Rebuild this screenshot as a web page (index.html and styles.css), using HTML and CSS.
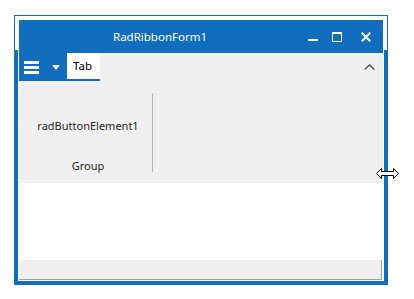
FILE: index.html
```html
<!DOCTYPE html>
<html lang="en">
<head>
    <meta charset="UTF-8">
    <meta name="viewport" content="width=device-width, initial-scale=1.0">
    <title>RadRibbonForm1</title>
    <link rel="stylesheet" href="styles.css">
</head>
<body>
    <div class="window">
        <div class="titlebar">
            <div class="title">RadRibbonForm1</div>
            <div class="caption-buttons">
                <svg class="cap cap-min" width="10" height="10" viewBox="0 0 10 10">
                    <rect x="0" y="7" width="10" height="2" fill="#fff"/>
                </svg>
                <svg class="cap cap-max" width="10" height="10" viewBox="0 0 10 10">
                    <rect x="0.5" y="0.5" width="9" height="9" fill="none" stroke="#fff"/>
                    <rect x="0" y="0" width="10" height="2" fill="#fff"/>
                </svg>
                <svg class="cap cap-close" width="10" height="10" viewBox="0 0 10 10">
                    <path d="M0.8 0.8 L9.2 9.2 M9.2 0.8 L0.8 9.2" stroke="#fff" stroke-width="2"/>
                </svg>
            </div>
        </div>

        <div class="tabstrip">
            <div class="app-button">
                <svg class="hamburger" width="15" height="13" viewBox="0 0 15 13">
                    <rect x="0" y="0" width="15" height="3" fill="#fff"/>
                    <rect x="0" y="5" width="15" height="3" fill="#fff"/>
                    <rect x="0" y="10" width="15" height="3" fill="#fff"/>
                </svg>
                <svg class="drop" width="8" height="5" viewBox="0 0 8 5">
                    <path d="M0 0 H8 L4 5 Z" fill="#fff"/>
                </svg>
            </div>
            <div class="tab active">Tab</div>
            <div class="spacer"></div>
            <svg class="collapse" width="11" height="6" viewBox="0 0 11 6">
                <path d="M0.7 5.5 L5.5 0.9 L10.3 5.5" fill="none" stroke="#555" stroke-width="1.4"/>
            </svg>
        </div>

        <div class="ribbon">
            <div class="group">
                <div class="group-items">radButtonElement1</div>
                <div class="group-title">Group</div>
            </div>
        </div>

        <div class="client"></div>
        <div class="statusbar"></div>
    </div>

    <svg class="resize-cursor" width="23" height="11" viewBox="0 0 23 11">
        <path d="M0.5 5.5 L5.5 0.5 V3.5 H17.5 V0.5 L22.5 5.5 L17.5 10.5 V7.5 H5.5 V10.5 Z" fill="#fff" stroke="#000"/>
    </svg>
</body>
</html>
```

FILE: styles.css
```css
body {
    margin: 0;
    background: #fff;
    font-family: "Segoe UI", "Noto Sans", "Open Sans", sans-serif;
    font-size: 11px;
}
.window {
    margin: 15px 0 0 14px;
    width: 364px;
    height: 260px;
    padding: 4px;
    border: 1px solid #116dbe;
    /* thick frame only on the lower part (window is being resized) */
    background:
        linear-gradient(#116dbe, #116dbe) left bottom / 3px calc(100% - 34px) no-repeat,
        linear-gradient(#116dbe, #116dbe) right bottom / 3px calc(100% - 34px) no-repeat,
        linear-gradient(#116dbe, #116dbe) left bottom / 100% 3px no-repeat,
        #fff;
    display: flex;
    flex-direction: column;
}
.titlebar {
    height: 33px;
    background: #116dbe;
    color: #fff;
    display: flex;
    align-items: center;
}
.title {
    flex: 1;
    text-align: center;
    font-size: 11.5px;
    padding-bottom: 1px;
}
.caption-buttons {
    display: flex;
    align-items: center;
    padding: 0 12px 0 7px;
}
.cap {
    display: block;
}
.cap-max {
    margin-left: 14px;
}
.cap-close {
    margin-left: 19px;
}
.tabstrip {
    height: 28px;
    background: #f0f0f0;
    display: flex;
}
.app-button {
    width: 48px;
    background: #116dbe;
    display: flex;
    align-items: flex-start;
}
.hamburger {
    display: block;
    margin: 8px 0 0 5px;
}
.drop {
    display: block;
    margin: 12px 0 0 13px;
}
.tab {
    width: 27px;
    height: 26px;
    padding-left: 6px;
    line-height: 25px;
    font-size: 11.5px;
    background: #fff;
    color: #000;
    border-bottom: 2px solid #116dbe;
}
.spacer {
    flex: 1;
}
.collapse {
    display: block;
    margin: 11px 8px 0 0;
}
.ribbon {
    height: 102px;
    background: #f0f0f0;
    display: flex;
}
.group {
    width: 128px;
    height: 79px;
    margin-top: 12px;
    padding-left: 5px;
    border-right: 1px solid #b4b4b4;
    color: #1e1e1e;
}
.group-items {
    text-align: center;
    margin-top: 25px;
    line-height: 16px;
}
.group-title {
    text-align: center;
    margin-top: 24px;
    line-height: 16px;
}
.client {
    height: 77px;
    background: #fff;
}
.statusbar {
    height: 19px;
    margin-right: 1px;
    background: #f0f0f0;
    border-right: 1px solid #a0a0a0;
    border-bottom: 1px solid #a0a0a0;
}
.resize-cursor {
    position: absolute;
    left: 376px;
    top: 168px;
}
```
